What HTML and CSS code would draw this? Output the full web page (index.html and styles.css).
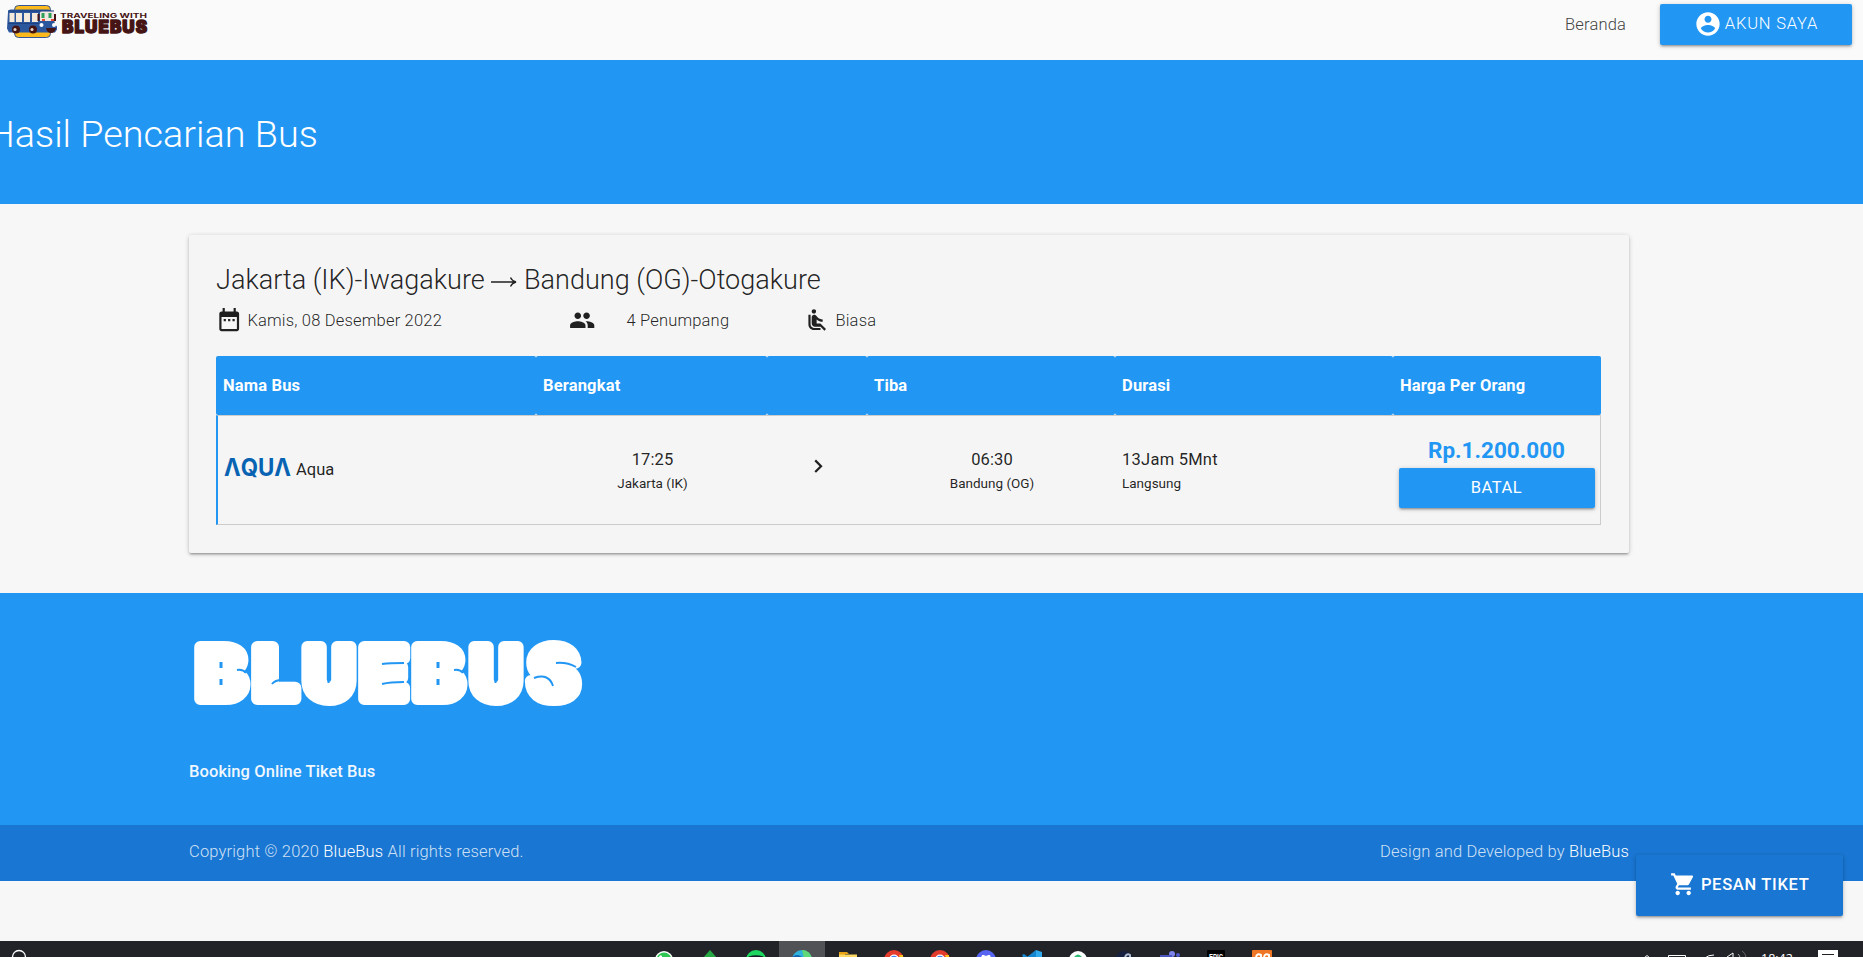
FILE: index.html
```html
<!DOCTYPE html>
<html lang="id">
<head>
<meta charset="utf-8">
<title>BlueBus - Hasil Pencarian Bus</title>
<link rel="stylesheet" href="styles.css">
</head>
<body>
<header class="navbar">
  <svg class="brand" viewBox="0 0 155 45" role="img" aria-label="Traveling with BlueBus">
    <rect x="14.500" y="5.500" width="36" height="32" rx="4" fill="#fbb91c" stroke="#33569a"/>
    <path d="M8 12q0-2.500 3-2.500h37q4 0 5 4l2 11 2 2v3l-2 3H9l-2-4z" fill="#2d579d"/>
    <path d="M9.500 13h5v9h-5zM16 13h6v9h-6zM24 13h6v9h-6zM32 13h6v9h-6z" fill="#f5e9dc"/>
    <path d="M40 13q0-2 2-2h10q2 0 2 3v7H40z" fill="#f0e7e0"/>
    <path d="M38.500 14v7M55 14v7" stroke="#451414" stroke-width="2"/>
    <path d="M43 13v5M50 13v5" stroke="#2e9e59" stroke-width="3"/>
    <path d="M42 20h3M51 20h3" stroke="#e04a35" stroke-width="2"/>
    <path d="M8 11h46M8 23.500h31" stroke="#1f4181"/>
    <circle cx="41.500" cy="25" r="2" fill="#fff"/><circle cx="54" cy="25" r="2" fill="#fff"/>
    <g fill="#451414"><circle cx="16" cy="29.500" r="4"/><circle cx="33" cy="29.500" r="4"/><path d="M46 28h10q-1 5-5 5t-5-5z"/></g>
    <g fill="#e9d9cd"><circle cx="15" cy="29.500" r="1.500"/><circle cx="32" cy="29.500" r="1.500"/></g>
    <text class="brand-top" x="60" y="17.700" textLength="87" lengthAdjust="spacingAndGlyphs">TRAVELING WITH</text>
    <text class="brand-name" x="62" y="33" textLength="85" lengthAdjust="spacing">BLUEBUS</text>
  </svg>
  <nav class="nav-links">
    <a class="nav-link">Beranda</a>
    <a class="btn btn-account">
      <svg class="icon" viewBox="0 0 24 24"><path d="M12 2C6.480 2 2 6.480 2 12s4.480 10 10 10 10-4.480 10-10S17.520 2 12 2zm0 3c1.660 0 3 1.340 3 3s-1.340 3-3 3-3-1.340-3-3 1.340-3 3-3zm0 14.200c-2.500 0-4.710-1.280-6-3.220.03-1.990 4-3.080 6-3.080 1.990 0 5.970 1.090 6 3.080-1.290 1.940-3.500 3.220-6 3.220z"/></svg>
      <span>AKUN SAYA</span>
    </a>
  </nav>
</header>

<section class="hero"><h1 class="hero-title">Hasil Pencarian Bus</h1></section>

<main class="container">
  <section class="card">
    <h2 class="route">Jakarta (IK)-Iwagakure <svg class="route-arrow" viewBox="0 0 26 14"><path d="M0 7h25M19.500 2.500Q21 6 25 7q-4 1-5.500 4.500"/></svg> Bandung (OG)-Otogakure</h2>
    <div class="trip-info">
      <span class="info info-date"><svg class="icon" viewBox="0 0 24 24"><path d="M9 11H7v2h2v-2zm4 0h-2v2h2v-2zm4 0h-2v2h2v-2zm2-7h-1V1h-2v3H8V1H6v3H5c-1.110 0-1.990.9-1.990 2L3 20c0 1.100.89 2 2 2h14c1.100 0 2-.9 2-2V6c0-1.100-.9-2-2-2zm0 16H5V9h14v11z"/></svg><span>Kamis, 08 Desember 2022</span></span>
      <span class="info info-people"><svg class="icon" viewBox="0 0 24 24"><path d="M16 11c1.660 0 2.990-1.340 2.990-3S17.660 5 16 5c-1.660 0-3 1.340-3 3s1.340 3 3 3zm-8 0c1.660 0 2.990-1.340 2.990-3S9.660 5 8 5C6.340 5 5 6.340 5 8s1.340 3 3 3zm0 2c-2.330 0-7 1.170-7 3.500V19h14v-2.500c0-2.330-4.670-3.500-7-3.500zm8 0c-.29 0-.62.02-.97.05 1.160.84 1.970 1.970 1.970 3.450V19h6v-2.500c0-2.330-4.670-3.500-7-3.500z"/></svg><span>4 Penumpang</span></span>
      <span class="info info-class"><svg class="icon" viewBox="0 0 24 24"><path d="M7.590 5.410c-.78-.78-.78-2.050 0-2.830s2.050-.78 2.830 0 .78 2.050 0 2.830-2.050.79-2.830 0zM6 16V7H4v9c0 2.760 2.240 5 5 5h6v-2H9c-1.660 0-3-1.340-3-3zm14 4.070L14.930 15H11.500v-3.680c1.400 1.150 3.600 2.160 5.500 2.160v-2.160c-1.660.02-3.610-.87-4.670-2.040l-1.400-1.550c-.19-.21-.43-.38-.69-.5-.29-.14-.62-.23-.96-.23h-.03C8.010 7 7 8.010 7 9.250V15c0 1.660 1.340 3 3 3h5.070l3.500 3.500L20 20.070z"/></svg><span>Biasa</span></span>
    </div>
    <div class="table">
      <div class="row head">
        <div class="cell">Nama Bus</div><div class="cell">Berangkat</div><div class="cell"></div><div class="cell">Tiba</div><div class="cell">Durasi</div><div class="cell">Harga Per Orang</div>
      </div>
      <div class="row body">
        <div class="cell bus">
          <svg class="aqua" viewBox="0 0 67 24" role="img" aria-label="AQUA"><text x="0" y="20" textLength="67" lengthAdjust="spacingAndGlyphs">ΛQUΛ</text></svg>
          <span>Aqua</span>
        </div>
        <div class="cell time"><span>17:25</span><small>Jakarta (IK)</small></div>
        <div class="cell arrow"><svg class="icon" viewBox="0 0 24 24"><path d="M10 6L8.590 7.410 13.170 12l-4.580 4.590L10 18l6-6z"/></svg></div>
        <div class="cell time"><span>06:30</span><small>Bandung (OG)</small></div>
        <div class="cell time duration"><span>13Jam 5Mnt</span><small>Langsung</small></div>
        <div class="cell price"><strong>Rp.1.200.000</strong><a class="btn">BATAL</a></div>
      </div>
    </div>
  </section>
</main>

<footer class="footer">
  <div class="container footer-main">
    <svg class="footer-logo" viewBox="0 0 400 92" role="img" aria-label="BLUEBUS">
      <g class="footer-word">
        <text x="8" y="62" textLength="49" lengthAdjust="spacingAndGlyphs">B</text>
        <text x="65" y="62" textLength="43" lengthAdjust="spacingAndGlyphs">L</text>
        <text x="115" y="62" textLength="50" lengthAdjust="spacingAndGlyphs">U</text>
        <text x="172" y="62" textLength="46" lengthAdjust="spacingAndGlyphs">E</text>
        <text x="225" y="62" textLength="49" lengthAdjust="spacingAndGlyphs">B</text>
        <text x="282" y="62" textLength="50" lengthAdjust="spacingAndGlyphs">U</text>
        <text x="340" y="62" textLength="49" lengthAdjust="spacingAndGlyphs">S</text>
      </g>
      <g class="footer-cuts">
        <path d="M32 25v6M32 42v6M249 25v6M249 42v6" stroke-width="3"/>
        <path d="M48 33q6-1 9 3M265 33q6-1 9 3M83 47q3-4 10-4"/>
        <path d="M139.500 13v33M306.500 13v33"/>
        <path d="M193 27q8-1 22-1M193 47q8-2 22-2"/>
        <path d="M367 26q11-1 20 4M345 41q15-5 19 8"/>
      </g>
    </svg>
    <p class="tagline">Booking Online Tiket Bus</p>
  </div>
  <div class="footer-bottom"><div class="container copyright"><span>Copyright © 2020 <a>BlueBus</a> All rights reserved.</span><span>Design and Developed by <a>BlueBus</a></span></div></div>
</footer>

<a class="btn btn-order"><svg class="icon" viewBox="0 0 24 24"><path d="M7 18c-1.100 0-1.990.9-1.990 2S5.900 22 7 22s2-.9 2-2-.9-2-2-2zM1 2v2h2l3.600 7.590-1.350 2.450c-.16.28-.25.61-.25.960 0 1.100.9 2 2 2h12v-2H7.420c-.14 0-.25-.11-.25-.25l.03-.12.9-1.630h7.450c.75 0 1.410-.41 1.750-1.030l3.580-6.490c.08-.14.12-.31.12-.480 0-.55-.45-1-1-1H5.210l-.94-2H1zm16 16c-1.100 0-1.990.9-1.990 2s.89 2 1.990 2 2-.9 2-2-.9-2-2-2z"/></svg><span>PESAN TIKET</span></a>

<div class="taskbar">
  <svg class="search" viewBox="0 0 30 16"><circle cx="19" cy="16" r="6.500" fill="none" stroke="#fff" stroke-width="1.300"/></svg>
  <div class="apps">
    <svg class="app" viewBox="0 0 46 16"><circle cx="23" cy="19" r="9" fill="#fff"/><circle cx="23" cy="19" r="7.500" fill="#2fc653"/><path d="M18 16q1-3 3-1v2h-3z" fill="#fff"/></svg>
    <svg class="app" viewBox="0 0 46 16"><path d="M23 9l7 8H16z" fill="#27a844"/></svg>
    <svg class="app" viewBox="0 0 46 16"><circle cx="23" cy="19" r="10" fill="#1ed760"/><path d="M16 16.500q7-2.500 14 0" stroke="#17202a" stroke-width="2" fill="none"/></svg>
    <svg class="app active" viewBox="0 0 46 16"><circle cx="23" cy="19" r="10" fill="#2fb2dd"/><path d="M23 9a10 10 0 0 1 10 8h-8z" fill="#61d978"/><path d="M13 16q5-4 10 0" fill="#1263b0"/></svg>
    <svg class="app" viewBox="0 0 46 16"><path d="M14 11h8l2 2h-4v3h-6z" fill="#e8a317"/><path d="M14 13.500h18V16H14z" fill="#ffd863"/></svg>
    <svg class="app" viewBox="0 0 46 16"><circle cx="23" cy="19" r="10" fill="#e33b2e"/><circle cx="23" cy="18.500" r="5" fill="#fff"/><circle cx="23" cy="18.500" r="3.700" fill="#4285f4"/><path d="M28 14h4v3h-3z" fill="#fbc116"/></svg>
    <svg class="app" viewBox="0 0 46 16"><circle cx="23" cy="19" r="10" fill="#e33b2e"/><circle cx="23" cy="18.500" r="5" fill="#fff"/><circle cx="23" cy="18.500" r="3.700" fill="#4285f4"/><path d="M28 14h4v3h-3z" fill="#fbc116"/></svg>
    <svg class="app" viewBox="0 0 46 16"><circle cx="23" cy="19" r="10" fill="#5865f2"/><path d="M18 17l1-3h2l1 .7h2l1-.7h2l1 3z" fill="#fff"/></svg>
    <svg class="app" viewBox="0 0 46 16"><path d="M13 14l2-1 4 3h-5zM18 16l9-7v7z" fill="#1687cf"/><path d="M27 9l6 2v5h-6z" fill="#30a9ee"/></svg>
    <svg class="app" viewBox="0 0 46 16"><circle cx="23" cy="19" r="9" fill="#fff"/><path d="M19 16q4-5 8 0z" fill="#2dbd76"/></svg>
    <svg class="app" viewBox="0 0 46 16"><circle cx="23" cy="19" r="9" fill="#17213f"/><path d="M24 16q2-4 5-2v2" stroke="#aebace" stroke-width="2" fill="none"/></svg>
    <svg class="app" viewBox="0 0 46 16"><circle cx="25" cy="13" r="3" fill="#7b83eb"/><circle cx="31" cy="14" r="2" fill="#5059c9"/><path d="M13 14h12v2H13z" fill="#4b53bc"/></svg>
    <svg class="app" viewBox="0 0 46 16"><rect x="14" y="9" width="18" height="12" rx="1" fill="#000"/><text class="epic" x="16" y="18.500" textLength="14" lengthAdjust="spacingAndGlyphs">EPIC</text></svg>
    <svg class="app" viewBox="0 0 46 16"><rect x="13" y="9" width="20" height="12" rx="1" fill="#ef7624"/><path d="M17 16q1-4 5-2v2M25 16q1-4 5-2v2" stroke="#fff" stroke-width="2" fill="none"/></svg>
  </div>
  <svg class="tray" viewBox="0 0 115 16"><g fill="none" stroke="#fff"><path d="M4 17l3-2.500 3 2.500M28.500 17v-2.500h17V17"/><path d="M65 17q3-3 9-3"/><path d="M87 16l6-4v5"/><path d="M98 13q2 1.500 2 4" stroke="#aaa"/><path d="M102 10q4 2 4 7" stroke="#666"/></g></svg>
  <span class="clock">18:42</span>
  <svg class="notice" viewBox="0 0 20 16"><path d="M0 9h20v8H0z" fill="#fff"/><path d="M4 13.500h12" stroke="#222329"/></svg>
</div>
</body>
</html>
```

FILE: styles.css
```css
* { box-sizing: border-box; }
html { font-size: 16.5px; }
body {
  margin: 0;
  height: 957px;
  overflow: hidden;
  position: relative;
  background: #f7f7f7;
  color: rgba(0, 0, 0, .87);
  font-family: Roboto, sans-serif;
  font-size: 1rem;
  font-weight: 300;
  line-height: 1.5;
}
.icon { width: 26.4px; height: 26.4px; flex: none; fill: currentColor; }
.container { width: 1440px; margin-left: 189px; }

.navbar { height: 60px; background: #fafafa; display: flex; justify-content: space-between; align-items: flex-start; padding-right: 11px; }
.brand { width: 155px; height: 45px; }
.brand-top { font: 700 6.5px Inter, sans-serif; fill: #451414; }
.brand-name { font: 900 17px Inter, sans-serif; fill: #451414; stroke: #451414; stroke-width: 1.4; stroke-linejoin: round; }
.nav-links { display: flex; align-items: center; gap: 34px; padding-top: 4px; }
.nav-link { color: #444; letter-spacing: .16px; padding-top: 1px; }
.btn {
  display: flex; align-items: center; justify-content: center;
  height: 40px; border-radius: 2px;
  background: #2196f3; color: #fff;
  letter-spacing: .55px;
  box-shadow: 0 2px 2px rgba(0, 0, 0, .14), 0 3px 1px -2px rgba(0, 0, 0, .12), 0 1px 5px rgba(0, 0, 0, .2);
}
.btn-account { width: 192px; height: 41px; gap: 3px; letter-spacing: .8px; }
.btn-account .icon { width: 28px; height: 28px; margin-top: -1px; }

.hero { height: 144px; background: #2196f3; overflow: hidden; display: flex; align-items: center; }
.hero-title { margin: 6px 0 0 -12px; font-size: 2.29rem; font-weight: 300; line-height: 1.1; color: #fff; }

.card {
  margin-top: 31px; height: 318px; padding: 28px 27px 0;
  background: #f5f5f5; border-radius: 2px;
  box-shadow: 0 2px 2px rgba(0, 0, 0, .14), 0 3px 1px -2px rgba(0, 0, 0, .12), 0 1px 5px rgba(0, 0, 0, .2);
}
.route { margin: 0; font-size: 1.64rem; font-weight: 300; line-height: 34px; }
.route-arrow { width: 26px; height: 14px; fill: none; stroke: currentColor; stroke-width: 1.300; }
.trip-info { display: flex; height: 26px; margin-top: 11px; letter-spacing: .19px; }
.info { display: flex; align-items: center; }
.info-date { width: 353px; gap: 5px; }
.info-people { width: 235px; gap: 31px; }
.info-class { gap: 5px; }
.info .icon { margin-top: -1px; }

.table { margin-top: 22px; width: 1385px; }
.row { display: grid; grid-template-columns: 320px 231px 100px 248px 278px 208px; }
.cell { padding: 0 6px; display: flex; align-items: center; }
.head .cell { height: 59px; padding: 2px 6px 0 7px; background: #2196f3; color: #fff; font-weight: 700; letter-spacing: .16px; border-radius: 2px; }
.body { height: 110px; border: 1px solid #ccc; border-left: 2px solid #2196f3; font-weight: 400; grid-template-columns: 318px 231px 100px 248px 278px 207px; }
.bus { gap: 5px; }
.aqua { width: 67px; height: 24px; margin-top: -4px; }
.aqua text { font: 700 24px Inter, sans-serif; fill: #0863b2; }
.time { flex-direction: column; justify-content: center; line-height: 25px; letter-spacing: .1px; padding: 2px 5px 0 7px; }
.time small { font-size: 13.5px; line-height: 23px; letter-spacing: 0; }
.duration { align-items: flex-start; letter-spacing: .25px; }
.arrow { justify-content: center; padding: 0 5px 7px 7px; }
.price { flex-direction: column; padding-top: 17px; }
.price strong { font-size: 22.5px; font-weight: 700; line-height: 35px; color: #2196f3; }
.price .btn { width: 196px; }

.footer { margin-top: 40px; background: #2196f3; color: #fff; }
.footer-main { height: 232px; padding-top: 44px; }
.footer-logo { display: block; width: 400px; height: 92px; }
.footer-word { font: 900 71px Inter, sans-serif; fill: #fff; stroke: #fff; stroke-width: 12px; stroke-linejoin: round; }
.footer-cuts { fill: none; stroke: #2196f3; stroke-width: 2px; }
.tagline { margin: 31px 0 0; font-weight: 500; letter-spacing: .08px; color: #f0f7fe; }
.footer-bottom { height: 56px; background: #1976d2; }
.copyright { height: 54px; display: flex; justify-content: space-between; align-items: center; letter-spacing: .16px; color: rgba(255, 255, 255, .8); }
.copyright a { color: #fff; }

.btn-order { position: absolute; left: 1636px; top: 855px; width: 207px; height: 61px; background: #1976d2; font-weight: 500; letter-spacing: .7px; gap: 5px; }
.btn-order .icon { margin-top: -2px; }

.taskbar { position: absolute; left: 0; right: 0; bottom: 0; height: 16px; display: flex; background: #222329; overflow: hidden; }
.search { width: 30px; height: 16px; }
.apps { display: flex; margin-left: 611px; }
.app { width: 46px; height: 16px; }
.active { background: #505256; }
.epic { font: 700 9px "Liberation Sans", sans-serif; fill: #fff; }
.tray { width: 115px; height: 16px; margin-left: 355px; }
.clock { width: 57px; padding-left: 6px; font: 400 12.5px/16px "Open Sans", sans-serif; color: #fff; padding-top: 10px; }
.notice { width: 20px; height: 16px; margin-left: 6px; }
```
